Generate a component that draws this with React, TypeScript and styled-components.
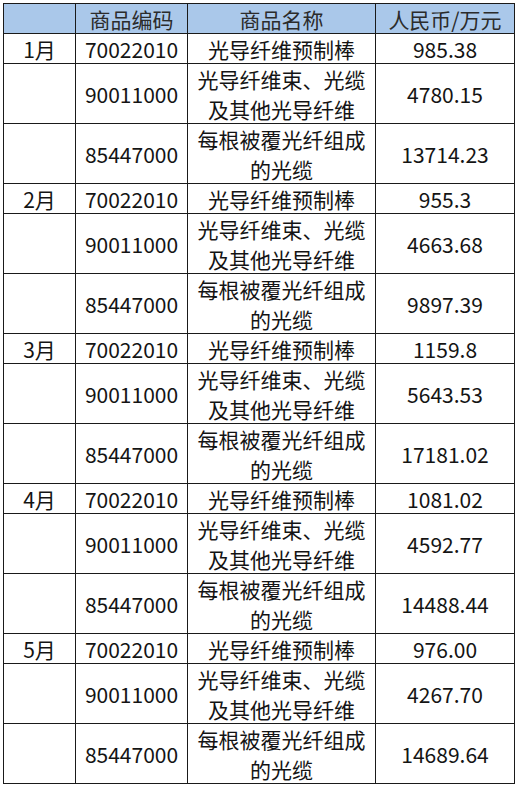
import React from 'react';
import styled, { createGlobalStyle } from 'styled-components';

const GlobalStyle = createGlobalStyle`
  html, body {
    margin: 0;
    padding: 0;
    background: #ffffff;
  }
  body {
    font-family: "Noto Sans CJK SC", "Noto Sans", sans-serif;
  }
`;

const Page = styled.div`
  padding: 3px 0 0 3px;
`;

const Table = styled.div`
  display: grid;
  grid-template-columns: 71px 111px 187px 138px;
  grid-auto-rows: auto;
  gap: 1px;
  padding: 1px;
  width: max-content;
  background: #1a1a1a;
`;

const Cell = styled.div<{ $head?: boolean; $tall?: boolean }>`
  display: flex;
  align-items: center;
  justify-content: center;
  text-align: center;
  height: ${(p) => (p.$tall ? '59px' : '29px')};
  background: ${(p) => (p.$head ? '#aac8ea' : '#ffffff')};
  color: ${(p) => (p.$head ? '#2b2b2b' : '#141414')};
  font-size: 21px;
  line-height: 30px;
  white-space: pre-line;
`;

type Item = { code: string; name: string; value: string };

const goods = [
  { code: '70022010', name: '光导纤维预制棒' },
  { code: '90011000', name: '光导纤维束、光缆\n及其他光导纤维' },
  { code: '85447000', name: '每根被覆光纤组成\n的光缆' },
];

const months: { month: string; values: string[] }[] = [
  { month: '1月', values: ['985.38', '4780.15', '13714.23'] },
  { month: '2月', values: ['955.3', '4663.68', '9897.39'] },
  { month: '3月', values: ['1159.8', '5643.53', '17181.02'] },
  { month: '4月', values: ['1081.02', '4592.77', '14488.44'] },
  { month: '5月', values: ['976.00', '4267.70', '14689.64'] },
];

function Row({ month, item, tall }: { month: string; item: Item; tall: boolean }) {
  return (
    <>
      <Cell $tall={tall}>{month}</Cell>
      <Cell $tall={tall}>{item.code}</Cell>
      <Cell $tall={tall}>{item.name}</Cell>
      <Cell $tall={tall}>{item.value}</Cell>
    </>
  );
}

export default function App() {
  return (
    <Page>
      <GlobalStyle />
      <Table>
        <Cell $head></Cell>
        <Cell $head>商品编码</Cell>
        <Cell $head>商品名称</Cell>
        <Cell $head>人民币/万元</Cell>
        {months.map((m) =>
          goods.map((g, i) => (
            <Row
              key={m.month + g.code}
              month={i === 0 ? m.month : ''}
              item={{ ...g, value: m.values[i] }}
              tall={i > 0}
            />
          ))
        )}
      </Table>
    </Page>
  );
}
